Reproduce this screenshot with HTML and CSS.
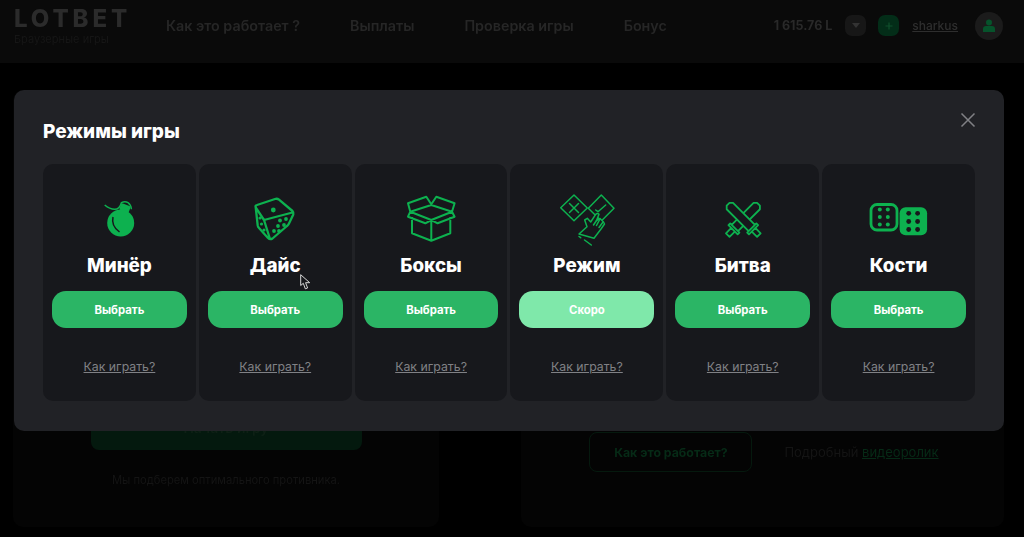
FILE: index.html
```html
<!DOCTYPE html>
<html lang="ru">
<head>
  <meta charset="UTF-8">
  <meta name="viewport" content="width=device-width, initial-scale=1.0">
  <title>LOTBET</title>
  <link rel="stylesheet" href="styles.css">
</head>
<body>
  <div class="page">
    <header class="header">
      <div class="logo">
        <div class="logo-name">LOTBET</div>
        <div class="logo-sub">Браузерные игры</div>
      </div>
      <nav class="nav">
        <a>Как это работает ?</a>
        <a>Выплаты</a>
        <a>Проверка игры</a>
        <a>Бонус</a>
      </nav>
      <div class="account">
        <span class="balance">1 615.76 L</span>
        <span class="square-btn square-btn-grey"><svg width="8" height="5" viewBox="0 0 8 5"><path d="M0 0h8L4 5z" fill="#333"/></svg></span>
        <span class="square-btn square-btn-green"><svg width="8" height="8" viewBox="0 0 8 8"><path d="M4 .5v7M.5 4h7" stroke="#10502c" stroke-width="1.2"/></svg></span>
        <a class="username">sharkus</a>
        <span class="avatar"><svg width="12" height="13" viewBox="0 0 12 13"><circle cx="6" cy="3.5" r="3" fill="#06532b"/><path d="M0 13V10q0-3 3-3h6q3 0 3 3v3z" fill="#06532b"/></svg></span>
      </div>
    </header>
    <main class="content">
      <section class="panel panel-left">
        <div class="start-btn">Начать игру</div>
        <p class="panel-note">Мы подберем оптимального противника.</p>
      </section>
      <section class="panel panel-right">
        <div class="how-row">
          <div class="how-btn">Как это работает?</div>
          <div class="how-video">Подробный <a>видеоролик</a></div>
        </div>
      </section>
    </main>
  </div>

  <div class="modal">
    <h2 class="modal-title">Режимы игры</h2>
    <svg class="modal-close" width="16" height="16" viewBox="0 0 16 16"><path d="M1.5 1.5l13 13M14.5 1.5l-13 13" stroke="#808185" stroke-width="1.5"/></svg>
    <div class="modes">
      <div class="mode">
        <svg class="mode-icon" viewBox="0 0 60 56">
          <path d="M15.7 13q5 4.300 10 4.300T32.400 10.700Q36 9 39 10.700q3 2 3.400 6.600" fill="none" stroke="#0db14f" stroke-width="1.500"/>
          <rect x="31" y="12.500" width="10" height="7" rx="1.500" transform="rotate(20 36 16)" fill="#0db14f"/>
          <circle cx="31.700" cy="31" r="13.500" fill="#0db14f"/>
          <path d="M24 25q-2 9 6.500 15" fill="none" stroke="#17181c" stroke-width="1.500"/>
        </svg>
        <div class="mode-name">Минёр</div>
        <a class="pick-btn">Выбрать</a>
        <a class="how-link">Как играть?</a>
      </div>
      <div class="mode">
        <svg class="mode-icon" viewBox="0 0 60 56">
          <path d="M10.700 15.300Q10 13.500 12 13L30 7Q32.300 6.300 34 7.700L47.500 19Q49 20.500 48.300 22.500L44 31.500Q43.300 33 42 34L27.500 46.500Q25 48 23 46L14 36Q13 35 12.700 33.500zM10.700 15.300L19 28 47.500 20.500M19 28L25 47" fill="none" stroke="#0db14f" stroke-width="2.300" stroke-linejoin="round"/>
          <g fill="#0db14f">
            <circle cx="28.300" cy="18" r="2.400"/>
            <circle cx="15" cy="26" r="1.600"/><circle cx="16.500" cy="32" r="1.600"/><circle cx="19" cy="38" r="1.600"/>
            <circle cx="41" cy="27" r="1.900"/><circle cx="35" cy="28.500" r="1.900"/><circle cx="33" cy="34" r="1.900"/><circle cx="39" cy="33" r="1.900"/><circle cx="29" cy="39" r="1.900"/><circle cx="34" cy="39" r="1.900"/>
          </g>
        </svg>
        <div class="mode-name">Дайс</div>
        <a class="pick-btn">Выбрать</a>
        <a class="how-link">Как играть?</a>
      </div>
      <div class="mode">
        <svg class="mode-icon" viewBox="0 0 60 56">
          <path d="M11 25V41.300L30.300 48.700 49.300 41.300V25M30.300 28V48.700M9.300 19.700L30.300 13 51 19.700 30.300 28zM9.300 19.700L7 11.300 25.300 4.700 30.300 12.300M51 19.700L53.600 11.300 35.300 4.700 30.300 12.300M9.300 19.700L7 24.700 24.300 31.300 30.300 28 36.600 31.300 53.600 24.700 51 19.700" fill="none" stroke="#0db14f" stroke-width="2" stroke-linejoin="round"/>
        </svg>
        <div class="mode-name">Боксы</div>
        <a class="pick-btn">Выбрать</a>
        <a class="how-link">Как играть?</a>
      </div>
      <div class="mode">
        <svg class="mode-icon" viewBox="0 0 60 56">
          <g fill="none" stroke="#0db14f" stroke-width="1.500" stroke-linejoin="round" stroke-linecap="round">
            <path d="M3.700 15.800L17 3 30.300 16 17 28.700z"/>
            <path d="M12.500 11.500l9 9M21.500 11.500l-9 9"/>
            <path d="M31.300 16.300L44.300 3 57 16.300 44.300 29z"/>
            <path d="M38.700 18l2.300 1.700 7.700-6.700"/>
            <path fill="#17181c" d="M22 42L30 34.700 27.700 28 30.300 26.300 33.700 30 38.700 22.300Q40.500 20.800 42 22.300L39.500 28.500 43 26.500 46.500 30 47.500 32 44 37 37 46.300z"/>
            <path d="M39.500 28.500L36.500 33M43 26.800L39.500 33.500M46 30L42 35.500"/>
            <path d="M22 44.500l1.700 1.200M27.500 48l6.800 5"/>
          </g>
        </svg>
        <div class="mode-name">Режим</div>
        <a class="pick-btn pick-btn-soon">Скоро</a>
        <a class="how-link">Как играть?</a>
      </div>
      <div class="mode">
        <svg class="mode-icon" viewBox="0 0 60 56">
          <g fill="#17181c" stroke="#0db14f" stroke-width="1.800" stroke-linejoin="round">
            <path transform="rotate(45 30.300 27.500)" d="M25.800 39.500V8.500L28.300 6h4l2.500 2.500V39.500zM23.800 39.500h13v2.500h-13zM27.800 42h5v7.500h-5z"/>
            <path transform="rotate(-45 30.300 27.500)" d="M25.800 39.500V8.500L28.300 6h4l2.500 2.500V39.500zM23.800 39.500h13v2.500h-13zM27.800 42h5v7.500h-5z"/>
          </g>
        </svg>
        <div class="mode-name">Битва</div>
        <a class="pick-btn">Выбрать</a>
        <a class="how-link">Как играть?</a>
      </div>
      <div class="mode">
        <svg class="mode-icon" viewBox="0 0 60 56">
          <rect x="2" y="12.500" width="26" height="25.500" rx="6" fill="none" stroke="#0db14f" stroke-width="2.800"/>
          <g fill="#0db14f">
            <circle cx="10.800" cy="17.500" r="2"/><circle cx="18.800" cy="17.500" r="2"/>
            <circle cx="10.800" cy="25" r="2"/><circle cx="18.800" cy="25" r="2"/>
            <circle cx="10.800" cy="32.500" r="2"/><circle cx="18.800" cy="32.500" r="2"/>
            <rect x="30.600" y="15.300" width="27.500" height="28" rx="6"/>
          </g>
          <g fill="#17181c">
            <circle cx="39.700" cy="21.300" r="2.400"/><circle cx="48.600" cy="21.300" r="2.400"/>
            <circle cx="39.700" cy="29.500" r="2.400"/><circle cx="48.600" cy="29.500" r="2.400"/>
            <circle cx="39.700" cy="37.500" r="2.400"/><circle cx="48.600" cy="37.500" r="2.400"/>
          </g>
        </svg>
        <div class="mode-name">Кости</div>
        <a class="pick-btn">Выбрать</a>
        <a class="how-link">Как играть?</a>
      </div>
    </div>
  </div>

  <svg class="cursor" width="11" height="16" viewBox="0 0 11 16"><path d="M.7.7L.7 11.500 3.300 9.300 5.300 14.800 7.600 14 5.600 8.700H9.700z" fill="#17181c" stroke="#d8d8d8" stroke-width="1"/></svg>
</body>
</html>
```

FILE: styles.css
```css
* {
  box-sizing: border-box;
}
body {
  margin: 0;
  height: 537px;
  overflow: hidden;
  background-color: #000;
  font-family: "Inter", "Noto Sans", sans-serif;
}
a {
  cursor: pointer;
}

/* dimmed page behind the modal */
.page {
  height: 537px;
  filter: blur(0.5px);
}
.header {
  display: flex;
  align-items: center;
  height: 63px;
  padding: 0 21px 12px 14px;
  background-color: #0a0a0a;
}
.logo {
  width: 152px;
  margin-top: 2px;
}
.logo-name {
  font-size: 24px;
  line-height: 24px;
  font-weight: 800;
  letter-spacing: 3.9px;
  color: #2b2b2b;
}
.logo-sub {
  font-size: 11px;
  line-height: 16px;
  color: #161616;
}
.nav {
  display: flex;
  gap: 50px;
  font-size: 14.3px;
  font-weight: 600;
  color: #262626;
}
.account {
  display: flex;
  align-items: center;
  margin-left: auto;
}
.balance {
  font-size: 12.5px;
  font-weight: 700;
  color: #292929;
  margin-right: 13px;
}
.square-btn {
  display: flex;
  align-items: center;
  justify-content: center;
  width: 21px;
  height: 21px;
  border-radius: 7px;
}
.square-btn-grey {
  background-color: #171717;
  margin-right: 12px;
}
.square-btn-green {
  background-color: #032d18;
  margin-right: 13px;
}
.username {
  font-size: 12px;
  font-weight: 500;
  color: #2e2e2e;
  text-decoration: underline;
  margin-right: 17px;
}
.avatar {
  display: flex;
  align-items: center;
  justify-content: center;
  width: 28px;
  height: 28px;
  border-radius: 50%;
  background-color: #1b1b1b;
}
.content {
  display: flex;
  justify-content: space-between;
  height: 464px;
  padding: 27px 20px 0 13px;
}
.panel {
  display: flex;
  flex-direction: column;
  align-items: center;
  height: 437px;
  border-radius: 10px;
  background-color: #040404;
}
.panel-left {
  width: 426px;
  padding-top: 320px;
}
.panel-right {
  width: 483px;
  padding-top: 342px;
}
.start-btn {
  display: flex;
  align-items: center;
  justify-content: center;
  width: 271px;
  height: 40px;
  padding-bottom: 5px;
  border-radius: 8px;
  background-color: #04190e;
  color: #0e2015;
  font-size: 14px;
  font-weight: 600;
}
.panel-note {
  margin: 23px 0 0;
  font-size: 11.2px;
  line-height: 15px;
  color: #141414;
}
.how-row {
  display: flex;
  align-items: center;
  gap: 32px;
  margin-left: 3px;
}
.how-btn {
  display: flex;
  align-items: center;
  justify-content: center;
  width: 163px;
  height: 40px;
  border: 1px solid #05190e;
  border-radius: 8px;
  color: #062a16;
  font-size: 12.3px;
  font-weight: 700;
}
.how-video {
  font-size: 13px;
  color: #141414;
}
.how-video a {
  color: #062a16;
  text-decoration: underline;
}

/* modal */
.modal {
  position: absolute;
  left: 14px;
  top: 90px;
  width: 990px;
  height: 341px;
  padding: 29px;
  border-radius: 10px;
  background-color: #212226;
}
.modal-title {
  margin: 0 0 20px;
  font-size: 19px;
  line-height: 25px;
  font-weight: 800;
  color: #fff;
}
.modal-close {
  position: absolute;
  right: 28px;
  top: 22px;
}
.modes {
  display: grid;
  grid-template-columns: repeat(6, 1fr);
  gap: 3px;
}
.mode {
  display: flex;
  flex-direction: column;
  align-items: center;
  height: 237px;
  padding: 28px 9px 0;
  border-radius: 10px;
  background-color: #17181c;
}
.mode-icon {
  width: 60px;
  height: 56px;
  display: block;
}
.mode-name {
  margin-top: 5px;
  font-size: 18.8px;
  line-height: 26px;
  font-weight: 800;
  color: #fff;
}
.pick-btn {
  display: flex;
  align-items: center;
  justify-content: center;
  width: 100%;
  height: 37px;
  margin-top: 12px;
  border-radius: 14px;
  background-color: #2bb565;
  color: #fff;
  font-size: 11.3px;
  font-weight: 700;
}
.pick-btn-soon {
  background-color: #7fe8aa;
}
.how-link {
  margin-top: 30px;
  font-size: 12.3px;
  line-height: 18px;
  color: #808185;
  text-decoration: underline;
}
.cursor {
  position: absolute;
  left: 300px;
  top: 274px;
}
```
